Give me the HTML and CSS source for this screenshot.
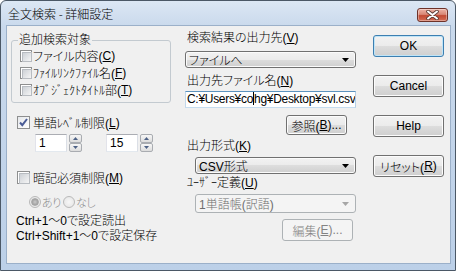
FILE: index.html
```html
<!DOCTYPE html>
<html lang="ja">
<head>
<meta charset="utf-8">
<link rel="stylesheet" href="styles.css">
</head>
<body>
<div class="window">
  <div class="titlebar">
    <span class="title">全文検索 - 詳細設定</span>
    <span class="close"><svg width="13" height="10" viewBox="0 0 13 10"><path d="M2 1.5 L11 8.5 M11 1.5 L2 8.5" stroke="#5a3a33" stroke-width="3.6" stroke-linecap="round"/><path d="M2 1.5 L11 8.5 M11 1.5 L2 8.5" stroke="#fff" stroke-width="2" stroke-linecap="round"/></svg></span>
  </div>
  <div class="client">
    <div class="col-left">
      <fieldset class="group">
        <legend>追加検索対象</legend>
        <div class="chk in"><span class="cb"></span>ファイル内容(<u>C</u>)</div>
        <div class="chk in"><span class="cb"></span>ﾌｧｲﾙﾘﾝｸﾌｧｲﾙ名(<u>F</u>)</div>
        <div class="chk in"><span class="cb"></span>ｵﾌﾞｼﾞｪｸﾄﾀｲﾄﾙ部(<u>T</u>)</div>
      </fieldset>
      <div class="chk lvl"><span class="cb checked"><svg width="11" height="11" viewBox="0 0 11 11"><path d="M2 5.5 L4.3 8.2 L9 2" fill="none" stroke="#4a5c96" stroke-width="2"/></svg></span>単語ﾚﾍﾞﾙ制限(<u>L</u>)</div>
      <div class="spins">
        <div class="spin">
          <span class="edit">1</span>
          <span class="updown">
            <span class="ud"><svg width="5" height="3" viewBox="0 0 5 3"><path d="M0 3 L2.5 0 L5 3Z" fill="#4d6185"/></svg></span>
            <span class="ud"><svg width="5" height="3" viewBox="0 0 5 3"><path d="M0 0 L2.5 3 L5 0Z" fill="#4d6185"/></svg></span>
          </span>
        </div>
        <div class="spin">
          <span class="edit">15</span>
          <span class="updown">
            <span class="ud"><svg width="5" height="3" viewBox="0 0 5 3"><path d="M0 3 L2.5 0 L5 3Z" fill="#4d6185"/></svg></span>
            <span class="ud"><svg width="5" height="3" viewBox="0 0 5 3"><path d="M0 0 L2.5 3 L5 0Z" fill="#4d6185"/></svg></span>
          </span>
        </div>
      </div>
      <div class="chk memo"><span class="cb"></span>暗記必須制限(<u>M</u>)</div>
      <div class="radios">
        <div class="radio"><span class="rb on"></span><span class="hk">あり</span></div>
        <div class="radio"><span class="rb"></span><span class="hk">なし</span></div>
      </div>
      <div class="hint first">Ctrl+1～0で設定読出</div>
      <div class="hint">Ctrl+Shift+1～0で設定保存</div>
    </div>
    <div class="col-mid">
      <div class="lbl l1">検索結果の出力先(<u>V</u>)</div>
      <div class="combo"><span>ファイルへ</span><svg width="7" height="4" viewBox="0 0 7 4"><path d="M0 0 H7 L3.5 4Z" fill="#000"/></svg></div>
      <div class="lbl l2">出力先ファイル名(<u>N</u>)</div>
      <div class="textbox">C:¥Users¥co<span class="caret"></span>hg¥Desktop¥svl.csv</div>
      <div class="btn browse">参照(<u>B</u>)...</div>
      <div class="lbl l3">出力形式(<u>K</u>)</div>
      <div class="combo ind"><span>CSV形式</span><svg width="7" height="4" viewBox="0 0 7 4"><path d="M0 0 H7 L3.5 4Z" fill="#000"/></svg></div>
      <div class="lbl l4">ﾕｰｻﾞｰ定義(<u>U</u>)</div>
      <div class="combo ind disabled"><span>1単語帳(訳語)</span><svg width="7" height="4" viewBox="0 0 7 4"><path d="M0 0 H7 L3.5 4Z" fill="#a6a6a6"/></svg></div>
      <div class="btn edit-btn disabled">編集(<u>E</u>)...</div>
    </div>
    <div class="col-right">
      <div class="btn default">OK</div>
      <div class="btn">Cancel</div>
      <div class="btn">Help</div>
      <div class="btn">リセット(<u>R</u>)</div>
    </div>
  </div>
</div>
</body>
</html>
```

FILE: styles.css
```css
* { box-sizing: border-box; }
html, body { margin: 0; padding: 0; background: #fff; }
body {
  font-family: "Liberation Sans", "Noto Sans CJK JP", sans-serif;
  font-size: 12px;
  font-weight: 300;
  color: #000;
  font-feature-settings: "palt";
}
u { text-decoration: underline; text-underline-offset: 1px; }
.hk { font-size: 11px; letter-spacing: -0.5px; }

.window {
  width: 456px;
  height: 271px;
  border: 1px solid #4b5866;
  border-radius: 6px 6px 0 0;
  background: linear-gradient(#dce7f4, #c9d9ec 26px, #bcd0e8);
  padding: 0 5px 7px 6px;
  display: flex;
  flex-direction: column;
}
.titlebar {
  height: 25px;
  flex: none;
  display: flex;
  align-items: flex-start;
  justify-content: space-between;
}
.title { margin: 5px 0 0 1px; font-family: "Noto Sans CJK JP", sans-serif; font-size: 12px; line-height: 16px; }
.close {
  width: 31px;
  height: 14px;
  margin: 7px 2px 0 0;
  border: 1px solid #6e3229;
  border-radius: 3px;
  background: linear-gradient(#edb3a6, #d98876 45%, #c24a33 55%, #d36d55);
  box-shadow: inset 0 0 0 1px rgba(255,255,255,0.35);
  display: flex;
  align-items: center;
  justify-content: center;
}
.client {
  flex: 1;
  background: #f0f0f0;
  box-shadow: 0 0 0 1px #9bb0c9;
  display: flex;
  padding-left: 4px;
}

/* left column */
.col-left { width: 160px; display: flex; flex-direction: column; }
.group {
  width: 160px;
  margin: 7px 0 0 0;
  padding: 0 4px 4px 0;
  border: 1px solid #c3cad0;
  border-radius: 3px;
  min-width: 0;
}
.group legend { padding: 0 1px; margin-left: 6px; line-height: 14px; }
.chk { display: flex; align-items: center; height: 17px; white-space: nowrap; }
.chk.in { padding-left: 8px; }
.chk.in .cb { width: 12px; height: 12px; margin-right: 1px; }
.chk.in .cb::before { width: 8px; height: 8px; }
.chk.lvl { margin-top: 11px; padding-left: 6px; }
.chk.memo { margin-top: 17px; padding-left: 6px; }
.cb {
  width: 13px;
  height: 13px;
  flex: none;
  border: 1px solid #8e8f8f;
  background: #fff;
  padding: 1px;
  margin-right: 3px;
}
.cb::before {
  content: "";
  display: block;
  width: 9px;
  height: 9px;
  border: 1px solid #b8bcc1;
  background: linear-gradient(135deg, #cdd1d6, #f5f5f5);
}
.cb.checked { padding: 0; background: linear-gradient(135deg, #e6e8eb, #fff); }
.cb.checked::before { display: none; }
.cb.checked svg { display: block; }

.spins { display: flex; margin-top: 3px; padding-left: 24px; gap: 24px; }
.spin { display: flex; height: 18px; }
.edit {
  width: 32px;
  height: 18px;
  border: 1px solid;
  border-color: #abadb3 #dbdfe6 #e3e9ef #e2e3ea;
  background: #fff;
  padding-left: 3px;
  line-height: 16px;
}
.updown { width: 13px; margin-left: 2px; display: flex; flex-direction: column; }
.ud {
  flex: 1;
  border: 1px solid #a9acb1;
  border-radius: 2px;
  background: linear-gradient(#f7f7f7, #dcdcdc);
  display: flex;
  align-items: center;
  justify-content: center;
}
.radios { display: flex; margin-top: 7px; padding-left: 18px; height: 17px; }
.radio { display: flex; align-items: center; color: #8d8d8d; width: 34px; white-space: nowrap; }
.rb {
  width: 12px;
  height: 12px;
  flex: none;
  border-radius: 50%;
  border: 1px solid #b9b9b9;
  background: radial-gradient(#f7f7f7, #e3e3e3);
  margin-right: 1px;
  display: flex;
  align-items: center;
  justify-content: center;
}
.rb.on::after {
  content: "";
  width: 6px;
  height: 6px;
  border-radius: 50%;
  background: radial-gradient(#c9c9c9, #8f8f8f);
  border: 1px solid #a9a9a9;
}
.hint { padding-left: 5px; line-height: 15px; white-space: nowrap; }
.hint.first { margin-top: 4px; }

/* middle column */
.col-mid { width: 171px; margin-left: 14px; display: flex; flex-direction: column; }
.lbl { line-height: 14px; padding-left: 2px; white-space: nowrap; }
.l1 { margin-top: 5px; }
.l2 { margin-top: 6px; }
.l3 { margin-top: 4px; }
.l4 { margin-top: 2px; }
.combo {
  margin-top: 6px;
  height: 17px;
  border: 1px solid #707070;
  border-radius: 3px;
  background: linear-gradient(#f2f2f2, #ebebeb 50%, #dddddd 50%, #cfcfcf);
  box-shadow: inset 0 0 0 1px #fbfbfb;
  display: flex;
  align-items: center;
  justify-content: space-between;
  padding: 0 6px 0 3px;
  white-space: nowrap;
}
.combo.ind { margin-left: 10px; margin-top: 4px; }
.combo.disabled {
  border-color: #adb2b5;
  background: #f4f4f4;
  box-shadow: none;
  color: #6d6d6d;
  height: 19px;
}
.textbox {
  margin-top: 3px;
  height: 17px;
  border: 1px solid;
  border-color: #5c93bf #b5cfe5 #c5dcef #c3d7ea;
  background: #fff;
  line-height: 15px;
  padding-left: 1px;
  letter-spacing: -0.3px;
  white-space: nowrap;
  overflow: hidden;
}
.caret { display: inline-block; width: 1px; height: 13px; background: #000; vertical-align: -2px; }
.btn {
  height: 22px;
  border: 1px solid #707070;
  border-radius: 3px;
  background: linear-gradient(#f2f2f2, #ebebeb 50%, #dddddd 50%, #cfcfcf);
  box-shadow: inset 0 0 0 1px #fcfcfc;
  display: flex;
  align-items: center;
  justify-content: center;
  white-space: nowrap;
}
.btn.browse { width: 61px; height: 20px; margin: 7px 0 0 101px; }
.btn.edit-btn { width: 71px; margin: 6px 0 0 97px; }
.btn.disabled { border-color: #adb2b5; background: #f4f4f4; box-shadow: none; color: #838383; }
.btn.default { border-color: #3c7fb1; box-shadow: inset 0 0 0 1px #bfe4f7; }

/* right column */
.col-right { width: 71px; margin-left: 17px; display: flex; flex-direction: column; gap: 18px; padding-top: 9px; }
```
